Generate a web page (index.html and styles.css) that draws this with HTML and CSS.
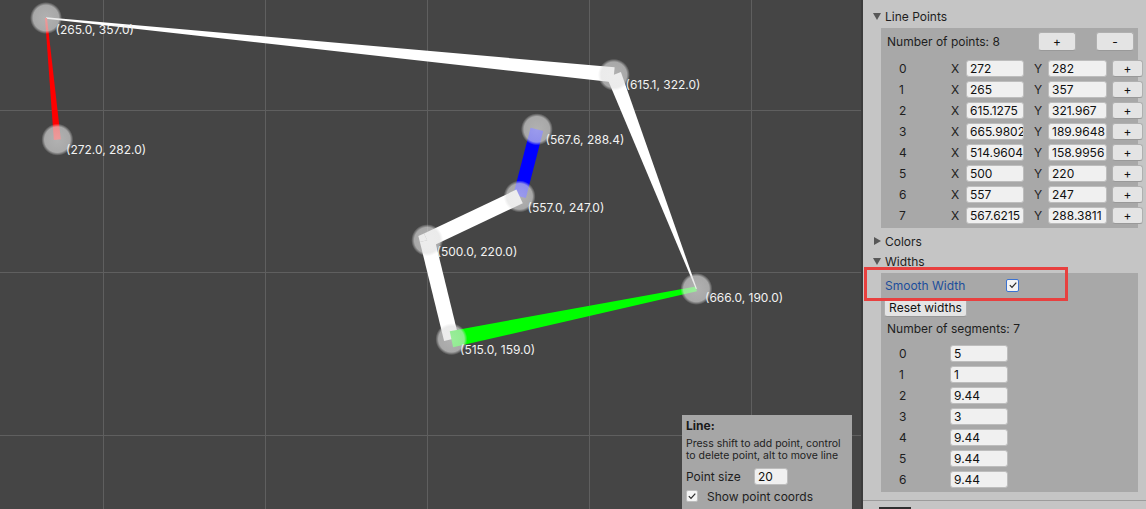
FILE: index.html
```html
<!DOCTYPE html>
<html>
<head>
<meta charset="utf-8">
<link rel="stylesheet" href="styles.css">
</head>
<body>
<div class="app">
  <main class="canvas">
    <svg class="scene" width="861" height="509" viewBox="0 0 861 509">
      <defs>
        <radialGradient id="dot" cx="0.5" cy="0.5" r="0.5">
          <stop offset="0" stop-color="#e4e4e4" stop-opacity="0.68"/>
          <stop offset="0.8" stop-color="#e0e0e0" stop-opacity="0.64"/>
          <stop offset="1" stop-color="#dddddd" stop-opacity="0"/>
        </radialGradient>
      </defs>
      <g class="grid">
        <line x1="103.5" y1="0" x2="103.5" y2="509"/>
        <line x1="265.5" y1="0" x2="265.5" y2="509"/>
        <line x1="427.5" y1="0" x2="427.5" y2="509"/>
        <line x1="589.5" y1="0" x2="589.5" y2="509"/>
        <line x1="751.5" y1="0" x2="751.5" y2="509"/>
        <line x1="0" y1="110.5" x2="861" y2="110.5"/>
        <line x1="0" y1="272.5" x2="861" y2="272.5"/>
        <line x1="0" y1="435.5" x2="861" y2="435.5"/>
      </g>
      <g class="segments">
        <polygon fill="#0000ff" points="525.9,198.0 543.2,130.9 530.6,127.7 513.3,194.8"/>
        <polygon fill="#ffffff" points="430.4,247.0 522.8,203.2 516.4,189.6 424.0,233.4"/>
        <polygon fill="#ffffff" points="419.9,242.0 418.4,236.0 424.0,233.4 427.2,240.2"/>
        <polygon fill="#ffffff" points="458.7,337.4 434.5,238.4 419.9,242.0 444.1,341.0"/>
        <polygon fill="#00ff00" points="695.9,286.45 449.75,331.17 453.05,347.23 696.9,291.35"/>
        <polygon fill="#ffffff" points="606.9,77.5 695.9,289.1 696.9,288.7 620.9,72.1"/>
        <polygon fill="#ffffff" points="45.92,18.8 613.15,82.26 614.65,67.34 46.08,17.2"/>
        <polygon fill="#ff0000" points="60.83,139.32 47.0,17.9 45.0,18.1 53.87,139.98"/>
      </g>
      <g class="dots" fill="url(#dot)">
        <circle cx="57.35" cy="139.65" r="16"/>
        <circle cx="46" cy="18" r="16"/>
        <circle cx="613.9" cy="74.8" r="16"/>
        <circle cx="696.4" cy="288.9" r="16"/>
        <circle cx="451.4" cy="339.2" r="16"/>
        <circle cx="427.2" cy="240.2" r="16"/>
        <circle cx="519.6" cy="196.4" r="16"/>
        <circle cx="536.9" cy="129.3" r="16"/>
      </g>
      <g class="labels">
        <text x="66" y="154.3">(272.0, 282.0)</text>
        <text x="55.5" y="34">(265.0, 357.0)</text>
        <text x="625.5" y="89.3">(615.1, 322.0)</text>
        <text x="705" y="302.3">(666.0, 190.0)</text>
        <text x="460" y="354.3">(515.0, 159.0)</text>
        <text x="436.5" y="256">(500.0, 220.0)</text>
        <text x="527.5" y="211.6">(557.0, 247.0)</text>
        <text x="545.5" y="144.3">(567.6, 288.4)</text>
      </g>
    </svg>
    <div class="info">
      <div class="info-title">Line:</div>
      <p class="info-desc">Press shift to add point, control<br>to delete point, alt to move line</p>
      <div class="info-row first"><span class="info-label">Point size</span><span class="field size-field">20</span></div>
      <div class="info-row">
        <span class="check gray"><svg width="10" height="10" viewBox="0 0 10 10"><path d="M1.8 5.2 L4 7.4 L8.3 2.6" /></svg></span>
        <span class="check-label">Show point coords</span>
      </div>
    </div>
  </main>

  <aside class="panel">
    <div class="fold-head"><span class="tri down"></span>Line Points</div>
    <div class="group points">
      <div class="count-row">
        <span class="count-label">Number of points: 8</span>
        <span class="btn wide">+</span>
        <span class="btn wide">-</span>
      </div>
      <div class="pt-row"><span class="idx">0</span><span class="axis">X</span><span class="field fx">272</span><span class="axis ay">Y</span><span class="field fy">282</span><span class="btn add">+</span></div>
      <div class="pt-row"><span class="idx">1</span><span class="axis">X</span><span class="field fx">265</span><span class="axis ay">Y</span><span class="field fy">357</span><span class="btn add">+</span></div>
      <div class="pt-row"><span class="idx">2</span><span class="axis">X</span><span class="field fx">615.1275</span><span class="axis ay">Y</span><span class="field fy">321.967</span><span class="btn add">+</span></div>
      <div class="pt-row"><span class="idx">3</span><span class="axis">X</span><span class="field fx">665.9802</span><span class="axis ay">Y</span><span class="field fy">189.9648</span><span class="btn add">+</span></div>
      <div class="pt-row"><span class="idx">4</span><span class="axis">X</span><span class="field fx">514.9604</span><span class="axis ay">Y</span><span class="field fy">158.9956</span><span class="btn add">+</span></div>
      <div class="pt-row"><span class="idx">5</span><span class="axis">X</span><span class="field fx">500</span><span class="axis ay">Y</span><span class="field fy">220</span><span class="btn add">+</span></div>
      <div class="pt-row"><span class="idx">6</span><span class="axis">X</span><span class="field fx">557</span><span class="axis ay">Y</span><span class="field fy">247</span><span class="btn add">+</span></div>
      <div class="pt-row"><span class="idx">7</span><span class="axis">X</span><span class="field fx">567.6215</span><span class="axis ay">Y</span><span class="field fy">288.3811</span><span class="btn add">+</span></div>
    </div>
    <div class="fold-head colors"><span class="tri right"></span>Colors</div>
    <div class="fold-head"><span class="tri down"></span>Widths</div>
    <div class="group widths">
      <div class="smooth-row">
        <span class="smooth-label">Smooth Width</span>
        <span class="check blue"><svg width="10" height="10" viewBox="0 0 10 10"><path d="M1.8 5.2 L4 7.4 L8.3 2.6" /></svg></span>
      </div>
      <span class="btn reset">Reset widths</span>
      <div class="seg-count">Number of segments: 7</div>
      <div class="seg-row"><span class="idx">0</span><span class="field fw">5</span></div>
      <div class="seg-row"><span class="idx">1</span><span class="field fw">1</span></div>
      <div class="seg-row"><span class="idx">2</span><span class="field fw">9.44</span></div>
      <div class="seg-row"><span class="idx">3</span><span class="field fw">3</span></div>
      <div class="seg-row"><span class="idx">4</span><span class="field fw">9.44</span></div>
      <div class="seg-row"><span class="idx">5</span><span class="field fw">9.44</span></div>
      <div class="seg-row"><span class="idx">6</span><span class="field fw">9.44</span></div>
    </div>
    <div class="panel-foot"><span class="foot-box"></span></div>
    <div class="highlight"></div>
  </aside>
</div>
</body>
</html>
```

FILE: styles.css
```css
* {
  box-sizing: border-box;
  margin: 0;
  padding: 0;
}

html, body {
  width: 1146px;
  height: 509px;
  overflow: hidden;
}

body {
  font-family: Inter, "Noto Sans", sans-serif;
  font-size: 12px;
  color: #1e1e1e;
  background: #454545;
}

.app {
  display: flex;
  width: 1146px;
  height: 509px;
}

/* ---------- canvas ---------- */
.canvas {
  position: relative;
  flex: none;
  width: 861px;
  height: 509px;
  background: #454545;
  overflow: hidden;
}

.scene {
  display: block;
}

.grid line {
  stroke: #5f5f5f;
  stroke-width: 1;
}

.labels text {
  font-family: Inter, "Noto Sans", sans-serif;
  font-size: 12px;
  fill: #f2f2f2;
}

.info {
  position: absolute;
  left: 682px;
  top: 415px;
  width: 170px;
  height: 100px;
  background: #a6a6a6;
  padding: 4px 0 0 4px;
}

.info-title {
  font-weight: 700;
  font-size: 12px;
  line-height: 14px;
  color: #1a1a1a;
}

.info-desc {
  margin-top: 5px;
  font-size: 10.5px;
  line-height: 12px;
  color: #222;
}

.info-row {
  display: flex;
  align-items: center;
  height: 20px;
}

.info-row.first {
  margin-top: 4px;
}

.info-label {
  width: 68px;
}

.size-field {
  width: 34px;
  height: 16px;
}

.check-label {
  margin-left: 9px;
}

/* ---------- common controls ---------- */
.field {
  display: flex;
  align-items: center;
  flex: none;
  height: 17px;
  padding-left: 3px;
  background: #f0f0f0;
  border: 1px solid #bdbdbd;
  border-radius: 3px;
  color: #111;
  white-space: nowrap;
  overflow: hidden;
}

.btn {
  display: flex;
  align-items: center;
  justify-content: center;
  flex: none;
  background: #e4e4e4;
  border: 1px solid #b0b0b0;
  border-bottom-color: #999;
  border-radius: 3px;
  color: #111;
}

.check {
  display: flex;
  align-items: center;
  justify-content: center;
  flex: none;
  width: 13px;
  height: 13px;
  background: #f4f4f4;
  border: 1px solid #9a9a9a;
  border-radius: 2px;
}

.check.gray {
  width: 12px;
  height: 12px;
  border-color: #bdbdbd;
}

.check.blue {
  border-color: #3a72d2;
}

.check svg path {
  fill: none;
  stroke: #2a2a2a;
  stroke-width: 1.2;
}

/* ---------- panel ---------- */
.panel {
  position: relative;
  flex: 1;
  background: #c5c5c5;
  border-left: 2px solid #3b3b3b;
  padding-top: 6px;
  overflow: hidden;
}

.fold-head {
  display: flex;
  align-items: center;
  height: 20px;
  padding-left: 10px;
  color: #1e1e1e;
}

.fold-head.colors {
  margin-top: 3px;
}

.tri {
  flex: none;
  width: 0;
  height: 0;
  margin-right: 4px;
}

.tri.down {
  border-left: 4px solid transparent;
  border-right: 4px solid transparent;
  border-top: 7px solid #575757;
  margin-top: 1px;
}

.tri.right {
  border-top: 4px solid transparent;
  border-bottom: 4px solid transparent;
  border-left: 7px solid #575757;
  margin-left: 1px;
  margin-right: 4px;
}

.group {
  margin: 2px 8px 0 18px;
  background: #a8a8a8;
  padding-bottom: 2px;
}

.group.points {
  padding-top: 4px;
}

.group.widths {
  padding-top: 2px;
}

.count-row {
  display: flex;
  align-items: center;
  height: 19px;
  margin-bottom: 7px;
  padding: 0 4px 0 6px;
}

.count-label {
  flex: 1;
}

.btn.wide {
  width: 38px;
  height: 19px;
  margin-left: 20px;
}

.count-label + .btn.wide {
  margin-left: 0;
}

.pt-row,
.seg-row {
  display: flex;
  align-items: center;
  height: 21px;
  padding-left: 18px;
}

.idx {
  flex: none;
  width: 52px;
  color: #1e1e1e;
}

.axis {
  flex: none;
  width: 15px;
  color: #1e1e1e;
}

.axis.ay {
  width: 14px;
  margin-left: 10px;
}

.fx {
  width: 58px;
}

.fy {
  width: 59px;
}

.btn.add {
  width: 31px;
  height: 17px;
  margin-left: 5px;
}

.smooth-row {
  display: flex;
  align-items: center;
  height: 20px;
  padding-left: 4px;
}

.smooth-label {
  flex: none;
  width: 121px;
  color: #1c4e9c;
}

.btn.reset {
  width: 83px;
  height: 19px;
  margin: 3px 0 1px 3px;
}

.seg-count {
  height: 21px;
  line-height: 21px;
  padding-left: 6px;
  margin-bottom: 4px;
}

.seg-row .idx {
  width: 51px;
}

.fw {
  width: 58px;
}

.panel-foot {
  margin-top: 8px;
  border-top: 1px solid #9c9c9c;
  height: 20px;
  padding: 6px 0 0 16px;
}

.foot-box {
  display: block;
  width: 32px;
  height: 10px;
  background: #2e2e2e;
}

.highlight {
  position: absolute;
  left: 1px;
  top: 267px;
  width: 204px;
  height: 34px;
  border: 3px solid #e8403f;
}
```
